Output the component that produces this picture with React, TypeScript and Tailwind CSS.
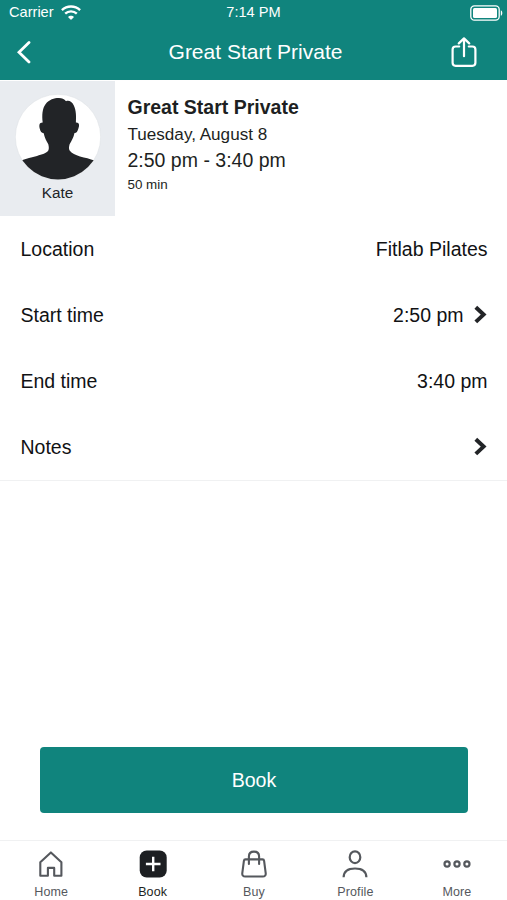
import type { ReactNode } from "react";

const WifiIcon = () => (
  <svg width="20" height="15" viewBox="0 0 20 15" fill="none" stroke="white" strokeWidth="2.4">
    <path d="M0.9 5.1C6 0.3 14 0.3 19.1 5.1" />
    <path d="M4.2 8.6C7.4 5.6 12.6 5.6 15.8 8.6" />
    <path d="M7 11.9C8.4 10.4 11.6 10.4 13 11.9L10.8 14.3Q10 15 9.2 14.3Z" fill="white" stroke="none" />
  </svg>
);

const BatteryIcon = () => (
  <svg width="33" height="16" viewBox="0 0 33 16" fill="none">
    <rect x="0.8" y="0.8" width="28.4" height="14.4" rx="3.6" stroke="white" strokeWidth="1.3" />
    <rect x="3" y="3" width="24" height="10" rx="1.5" fill="white" />
    <path d="M30.8 5.2C32.8 6 32.8 10 30.8 10.8Z" fill="white" />
  </svg>
);

const ShareIcon = () => (
  <svg width="26" height="31" viewBox="0 0 26 31" fill="none" stroke="white" strokeWidth="2.2" strokeLinecap="round" strokeLinejoin="round">
    <path d="M8.2 9.5H4.6C2.6 9.5 1.6 10.5 1.6 12.5V25.8C1.6 27.8 2.6 28.8 4.6 28.8H21.4C23.4 28.8 24.4 27.8 24.4 25.8V12.5C24.4 10.5 23.4 9.5 21.4 9.5H17.8" />
    <path d="M13 19.2V1.6M7.8 6.4L13 1.4L18.2 6.4" />
  </svg>
);

const Chevron = () => (
  <svg width="14" height="20" viewBox="0 0 14 20" fill="none" stroke="#222427" strokeWidth="4">
    <path d="M1.8 2.3L9.6 9.6L1.8 16.9" />
  </svg>
);

const Avatar = () => (
  <svg width="86" height="86" viewBox="0 0 86 86">
    <defs>
      <clipPath id="avatar">
        <circle cx="43" cy="43" r="42.5" />
      </clipPath>
    </defs>
    <circle cx="43" cy="43" r="42.7" fill="white" stroke="#dfe2e5" strokeWidth="0.6" />
    <path
      clipPath="url(#avatar)"
      fill="#222427"
      d="M27.7 28.5C26.8 21 27.3 14.5 30.5 10.2C34 5.7 39.5 4.1 43.5 4.1C46.5 4 49.2 4.8 51 7.2C54 5.9 57 7.8 58.7 11.2C61.3 16 61.3 23 60.9 28.5C64.6 28.3 64.6 31.7 63.3 34.7C62.5 37.5 61.3 39.2 59.5 39C58.6 43.5 56.5 47 54.6 50.2C53.8 53 53.8 55 54.6 56.6C56.8 59.4 60.5 61 65 62.4C70 63.8 75 64.6 79.5 66.6V86H6V66.6C11 64.4 17 63.4 22 62C27 60.6 31.5 59.2 33.3 56.6C34 55 34 53 33.3 50.2C31.5 47 29.5 43.5 28.7 39.2C26.6 39.2 25.4 37.3 24.7 34.5C24 31.3 24.2 28.4 27.7 28.5Z"
    />
  </svg>
);

const HomeIcon = () => (
  <svg width="28" height="28" viewBox="0 0 28 28" fill="none" stroke="#55585d" strokeWidth="2.1">
    <path d="M3.3 12.2L13.9 2.4L24.4 12.2V25.7H17.2V17.9H10.9V25.7H3.3Z" strokeLinejoin="round" />
  </svg>
);

const BookIcon = () => (
  <svg width="28" height="28" viewBox="0 0 28 28">
    <rect x="0.7" y="0.5" width="27" height="27" rx="7" fill="#1d1f22" />
    <path d="M14.2 6.7V21.3M6.9 14H21.5" stroke="white" strokeWidth="2.4" />
  </svg>
);

const BagIcon = () => (
  <svg width="28" height="28" viewBox="0 0 28 28" fill="none" stroke="#55585d" strokeWidth="2.1" strokeLinejoin="round" strokeLinecap="round">
    <path d="M5.5 9.4H22.5C23.5 9.4 24 10 24.1 10.9L25.7 23.1C26 25.3 24.8 26.5 22.8 26.5H5.2C3.2 26.5 2 25.3 2.3 23.1L3.9 10.9C4 10 4.5 9.4 5.5 9.4Z" />
    <path d="M8.9 14V6.5C8.9 3.5 11 1.6 14 1.6C17 1.6 19.1 3.5 19.1 6.5V14" />
  </svg>
);

const ProfileIcon = () => (
  <svg width="28" height="28" viewBox="0 0 28 28" fill="none" stroke="#55585d" strokeWidth="2.2">
    <ellipse cx="14" cy="7.2" rx="5.3" ry="5.9" />
    <path d="M2.6 27.2C2.8 21.4 7 18.5 14 18.5C21 18.5 25.2 21.4 25.4 27.2" />
  </svg>
);

const MoreIcon = () => (
  <svg width="28" height="28" viewBox="0 0 28 28" fill="none" stroke="#55585d" strokeWidth="2.2">
    <circle cx="4.1" cy="14" r="2.6" />
    <circle cx="14" cy="14" r="2.6" />
    <circle cx="23.9" cy="14" r="2.6" />
  </svg>
);

const Row = ({ label, value, arrow = false }: { label: string; value?: string; arrow?: boolean }) => (
  <div className="flex h-[66px] items-center justify-between pl-[20.5px] pr-[19.5px] text-[19.5px]">
    <span className="pt-0.5">{label}</span>
    <div className="flex items-center gap-2.5">
      {value && <span className="pt-0.5">{value}</span>}
      {arrow && <Chevron />}
    </div>
  </div>
);

const Tab = ({ label, icon, active = false }: { label: string; icon: ReactNode; active?: boolean }) => (
  <button className="flex flex-1 flex-col items-center pl-px pt-[9px]">
    {icon}
    <span className={active ? "mt-1.5 text-[12.5px] leading-4 tracking-[0.1px] text-[#1d1f22]" : "mt-1.5 text-[12.5px] leading-4 tracking-[0.1px] text-[#55585d]"}>
      {label}
    </span>
  </button>
);

const App = () => {
  return (
    <div className="flex h-[900px] w-[507px] flex-col overflow-hidden bg-white font-['Liberation_Sans',Arial,sans-serif] text-[#111214]">
      <header className="h-20 bg-[#10847d] text-white">
        {/* Status bar */}
        <div className="grid h-[25px] grid-cols-3 items-center pl-[9px] pr-1 text-[14.6px] leading-[25px]">
          <div className="flex items-center gap-[7px]">
            <span>Carrier</span>
            <WifiIcon />
          </div>
          <span className="pr-[5px] text-center">7:14 PM</span>
          <div className="flex justify-end">
            <BatteryIcon />
          </div>
        </div>

        {/* Title bar */}
        <div className="grid h-[54px] grid-cols-[60px_1fr_60px] items-center">
          <button className="pl-[17px]">
            <svg width="15" height="23" viewBox="0 0 15 23" fill="none" stroke="white" strokeWidth="2.8" strokeLinecap="round">
              <path d="M12 1.5L2 11.2L12 20.9" />
            </svg>
          </button>
          <h1 className="pl-1 text-center text-[21px]">Great Start Private</h1>
          <button className="pl-[3.5px]">
            <ShareIcon />
          </button>
        </div>
      </header>

      {/* Session summary */}
      <section className="flex h-[136px] pt-px">
        <div className="flex w-[115px] flex-col items-center bg-[#e9ecf0] pt-[13px] text-[#222427]">
          <Avatar />
          <span className="mt-[3px] text-[15.3px] leading-5">Kate</span>
        </div>
        <div className="pl-[12.5px] pt-[13px] text-[#1d1f22]">
          <h2 className="text-[19.5px] font-bold leading-[27px]">Great Start Private</h2>
          <p className="pt-px text-[17.1px] leading-[26px]">Tuesday, August 8</p>
          <p className="text-[19.5px] leading-6">2:50 pm - 3:40 pm</p>
          <p className="text-[13.4px] leading-[25px]">50 min</p>
        </div>
      </section>

      {/* Details */}
      <section className="h-[265px] border-b border-[#f0f1f2]">
        <Row label="Location" value="Fitlab Pilates" />
        <Row label="Start time" value="2:50 pm" arrow />
        <Row label="End time" value="3:40 pm" />
        <Row label="Notes" arrow />
      </section>

      <div className="flex flex-1 items-end px-10 pb-[27px]">
        <button className="h-[66px] w-[428px] shrink-0 rounded bg-[#10847d] pt-0.5 text-[19.6px] text-white">Book</button>
      </div>

      <nav className="flex h-[60px] border-t border-[#f0f1f2]">
        <Tab label="Home" icon={<HomeIcon />} />
        <Tab label="Book" icon={<BookIcon />} active />
        <Tab label="Buy" icon={<BagIcon />} />
        <Tab label="Profile" icon={<ProfileIcon />} />
        <Tab label="More" icon={<MoreIcon />} />
      </nav>
    </div>
  );
};

export default App;
